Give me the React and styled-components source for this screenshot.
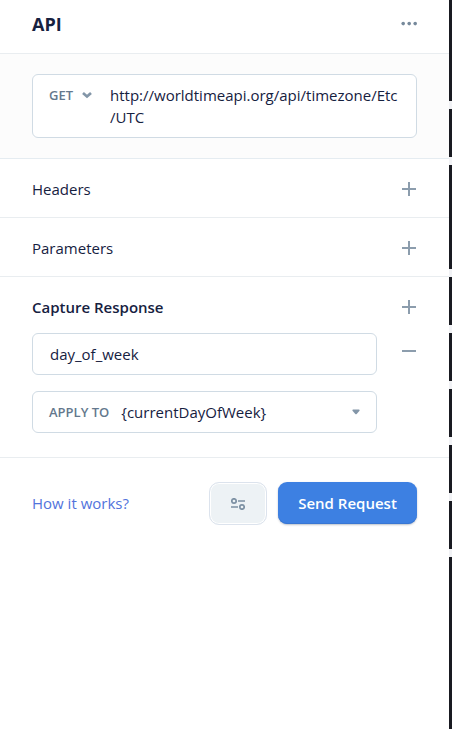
import styled, { createGlobalStyle } from "styled-components";

const GlobalStyle = createGlobalStyle`
  * {
    box-sizing: border-box;
  }
  body {
    margin: 0;
    background: #fff;
    color: #16213f;
    font-family: "Open Sans", "Noto Sans", sans-serif;
    font-size: 15px;
    line-height: 22px;
  }
  button {
    font: inherit;
    padding: 0;
    border: 0;
    background: none;
  }
`;

const Page = styled.div`
  display: flex;
  width: 452px;
  height: 729px;
  overflow: hidden;
`;

const Panel = styled.main`
  width: 449px;
  flex: none;
`;

const Header = styled.header`
  display: flex;
  align-items: center;
  justify-content: space-between;
  height: 54px;
  padding: 0 32px 6px;
  border-bottom: 1px solid #e9edf0;
`;

const Title = styled.h1`
  margin: 0;
  font-size: 18px;
  line-height: 24px;
  font-weight: 700;
`;

const IconButton = styled.button`
  display: flex;
  align-items: center;
  justify-content: center;
  width: 16px;
  height: 16px;
  flex: none;
  color: #8c9dad;
`;

const UrlSection = styled.section`
  height: 105px;
  padding: 20px 32px;
  background: #fcfcfc;
  border-bottom: 1px solid #e5ecf1;
`;

const UrlBox = styled.div`
  display: flex;
  height: 64px;
  padding: 9px 16px;
  background: #fff;
  border: 1px solid #d0dbe4;
  border-radius: 6px;
`;

const Method = styled.button`
  display: flex;
  align-items: center;
  gap: 9px;
  width: 61px;
  height: 22px;
  flex: none;
  color: #8396a8;
`;

const Label = styled.span`
  color: #64788d;
  font-size: 13px;
  font-weight: 600;
  white-space: nowrap;
`;

const Url = styled.div`
  white-space: nowrap;
`;

const Section = styled.section`
  padding: ${(props) => (props.$open ? "0 32px 24px" : "0 32px")};
  border-bottom: 1px solid #e9edf0;
`;

const SectionHead = styled.div`
  display: flex;
  align-items: center;
  justify-content: space-between;
  height: ${(props) => (props.$open ? "56px" : "58px")};
  padding-top: ${(props) => (props.$open ? "4px" : "2px")};
  font-weight: ${(props) => (props.$open ? 600 : 400)};
`;

const CaptureRow = styled.div`
  display: flex;
  justify-content: space-between;
`;

const Fields = styled.div`
  display: flex;
  flex-direction: column;
  gap: 16px;
  width: 345px;
`;

const Field = styled.div`
  display: flex;
  align-items: center;
  gap: 12px;
  height: 42px;
  padding: 0 16px;
  border: 1px solid #d0dbe4;
  border-radius: 6px;
`;

const Value = styled.span`
  flex: 1;
  padding-left: ${(props) => (props.$inset ? "1px" : 0)};
`;

const RemoveButton = styled(IconButton)`
  margin-top: 10px;
`;

const Footer = styled.footer`
  display: flex;
  align-items: center;
  padding: 24px 32px;
`;

const HelpLink = styled.a`
  flex: 1;
  padding-bottom: 2px;
  color: #5273dc;
`;

const SettingsButton = styled.button`
  display: flex;
  align-items: center;
  justify-content: center;
  width: 58px;
  height: 43px;
  margin-right: 11px;
  color: #7c90a3;
  background: #edf2f5;
  border: 1px solid #dce3ed;
  border-radius: 10px;
  box-shadow: inset 0 0 0 1px #fff;
`;

const SendButton = styled.button`
  width: 139px;
  height: 42px;
  margin-bottom: 1px;
  color: #fff;
  font-weight: 600;
  background: #3d80e2;
  border-radius: 9px;
  box-shadow: inset 0 -1px 0 #3876d3, 0 1px 2px rgba(30, 50, 80, 0.3);
`;

const Rail = styled.aside`
  display: flex;
  flex-direction: column;
  gap: 8px;
  width: 3px;
  background: #f1f2f5;
`;

const RailBlock = styled.div`
  flex: none;
  height: ${(props) => props.$height}px;
  background: #191a21;
`;

const railBlocks = [101, 48, 104, 48, 48, 48, 48, 48, 176];

const PlusIcon = () => (
  <svg width="16" height="16" fill="none" stroke="currentColor" strokeWidth="2">
    <path d="M1 8h14M8 1v14" />
  </svg>
);

const MinusIcon = () => (
  <svg width="16" height="16" fill="none" stroke="currentColor" strokeWidth="2">
    <path d="M1 8h14" />
  </svg>
);

const DotsIcon = () => (
  <svg width="16" height="16" fill="#76899b">
    <circle cx="2.2" cy="7.6" r="1.8" />
    <circle cx="8.2" cy="7.6" r="1.8" />
    <circle cx="14.2" cy="7.6" r="1.8" />
  </svg>
);

const ChevronIcon = () => (
  <svg width="10" height="8" fill="none" stroke="currentColor" strokeWidth="2.7">
    <path d="M1 2l4 3.5L9 2" />
  </svg>
);

const CaretIcon = () => (
  <svg width="8" height="6" fill="#8396a8">
    <path d="M1 .5h6q1 .2.5 1.2L4.7 4.9q-.7.6-1.4 0L.5 1.7Q0 .7 1 .5z" />
  </svg>
);

const SlidersIcon = () => (
  <svg width="14" height="12" fill="none" stroke="currentColor" strokeWidth="1.7">
    <circle cx="3" cy="3" r="2.2" />
    <path d="M7 3h7M0 9h7" />
    <circle cx="11" cy="9" r="2.2" />
  </svg>
);

const AddButton = () => (
  <IconButton>
    <PlusIcon />
  </IconButton>
);

export default function App() {
  return (
    <Page>
      <GlobalStyle />
      <Panel>
        <Header>
          <Title>API</Title>
          <IconButton>
            <DotsIcon />
          </IconButton>
        </Header>

        <UrlSection>
          <UrlBox>
            <Method>
              <Label>GET</Label>
              <ChevronIcon />
            </Method>
            <Url>
              http://worldtimeapi.org/api/timezone/Etc
              <br />
              /UTC
            </Url>
          </UrlBox>
        </UrlSection>

        <Section>
          <SectionHead>
            Headers
            <AddButton />
          </SectionHead>
        </Section>

        <Section>
          <SectionHead>
            Parameters
            <AddButton />
          </SectionHead>
        </Section>

        <Section $open>
          <SectionHead $open>
            Capture Response
            <AddButton />
          </SectionHead>
          <CaptureRow>
            <Fields>
              <Field>
                <Value $inset>day_of_week</Value>
              </Field>
              <Field>
                <Label>APPLY TO</Label>
                <Value>{"{currentDayOfWeek}"}</Value>
                <CaretIcon />
              </Field>
            </Fields>
            <RemoveButton>
              <MinusIcon />
            </RemoveButton>
          </CaptureRow>
        </Section>

        <Footer>
          <HelpLink>How it works?</HelpLink>
          <SettingsButton>
            <SlidersIcon />
          </SettingsButton>
          <SendButton>Send Request</SendButton>
        </Footer>
      </Panel>
      <Rail>
        {railBlocks.map((height, i) => (
          <RailBlock key={i} $height={height} />
        ))}
      </Rail>
    </Page>
  );
}
